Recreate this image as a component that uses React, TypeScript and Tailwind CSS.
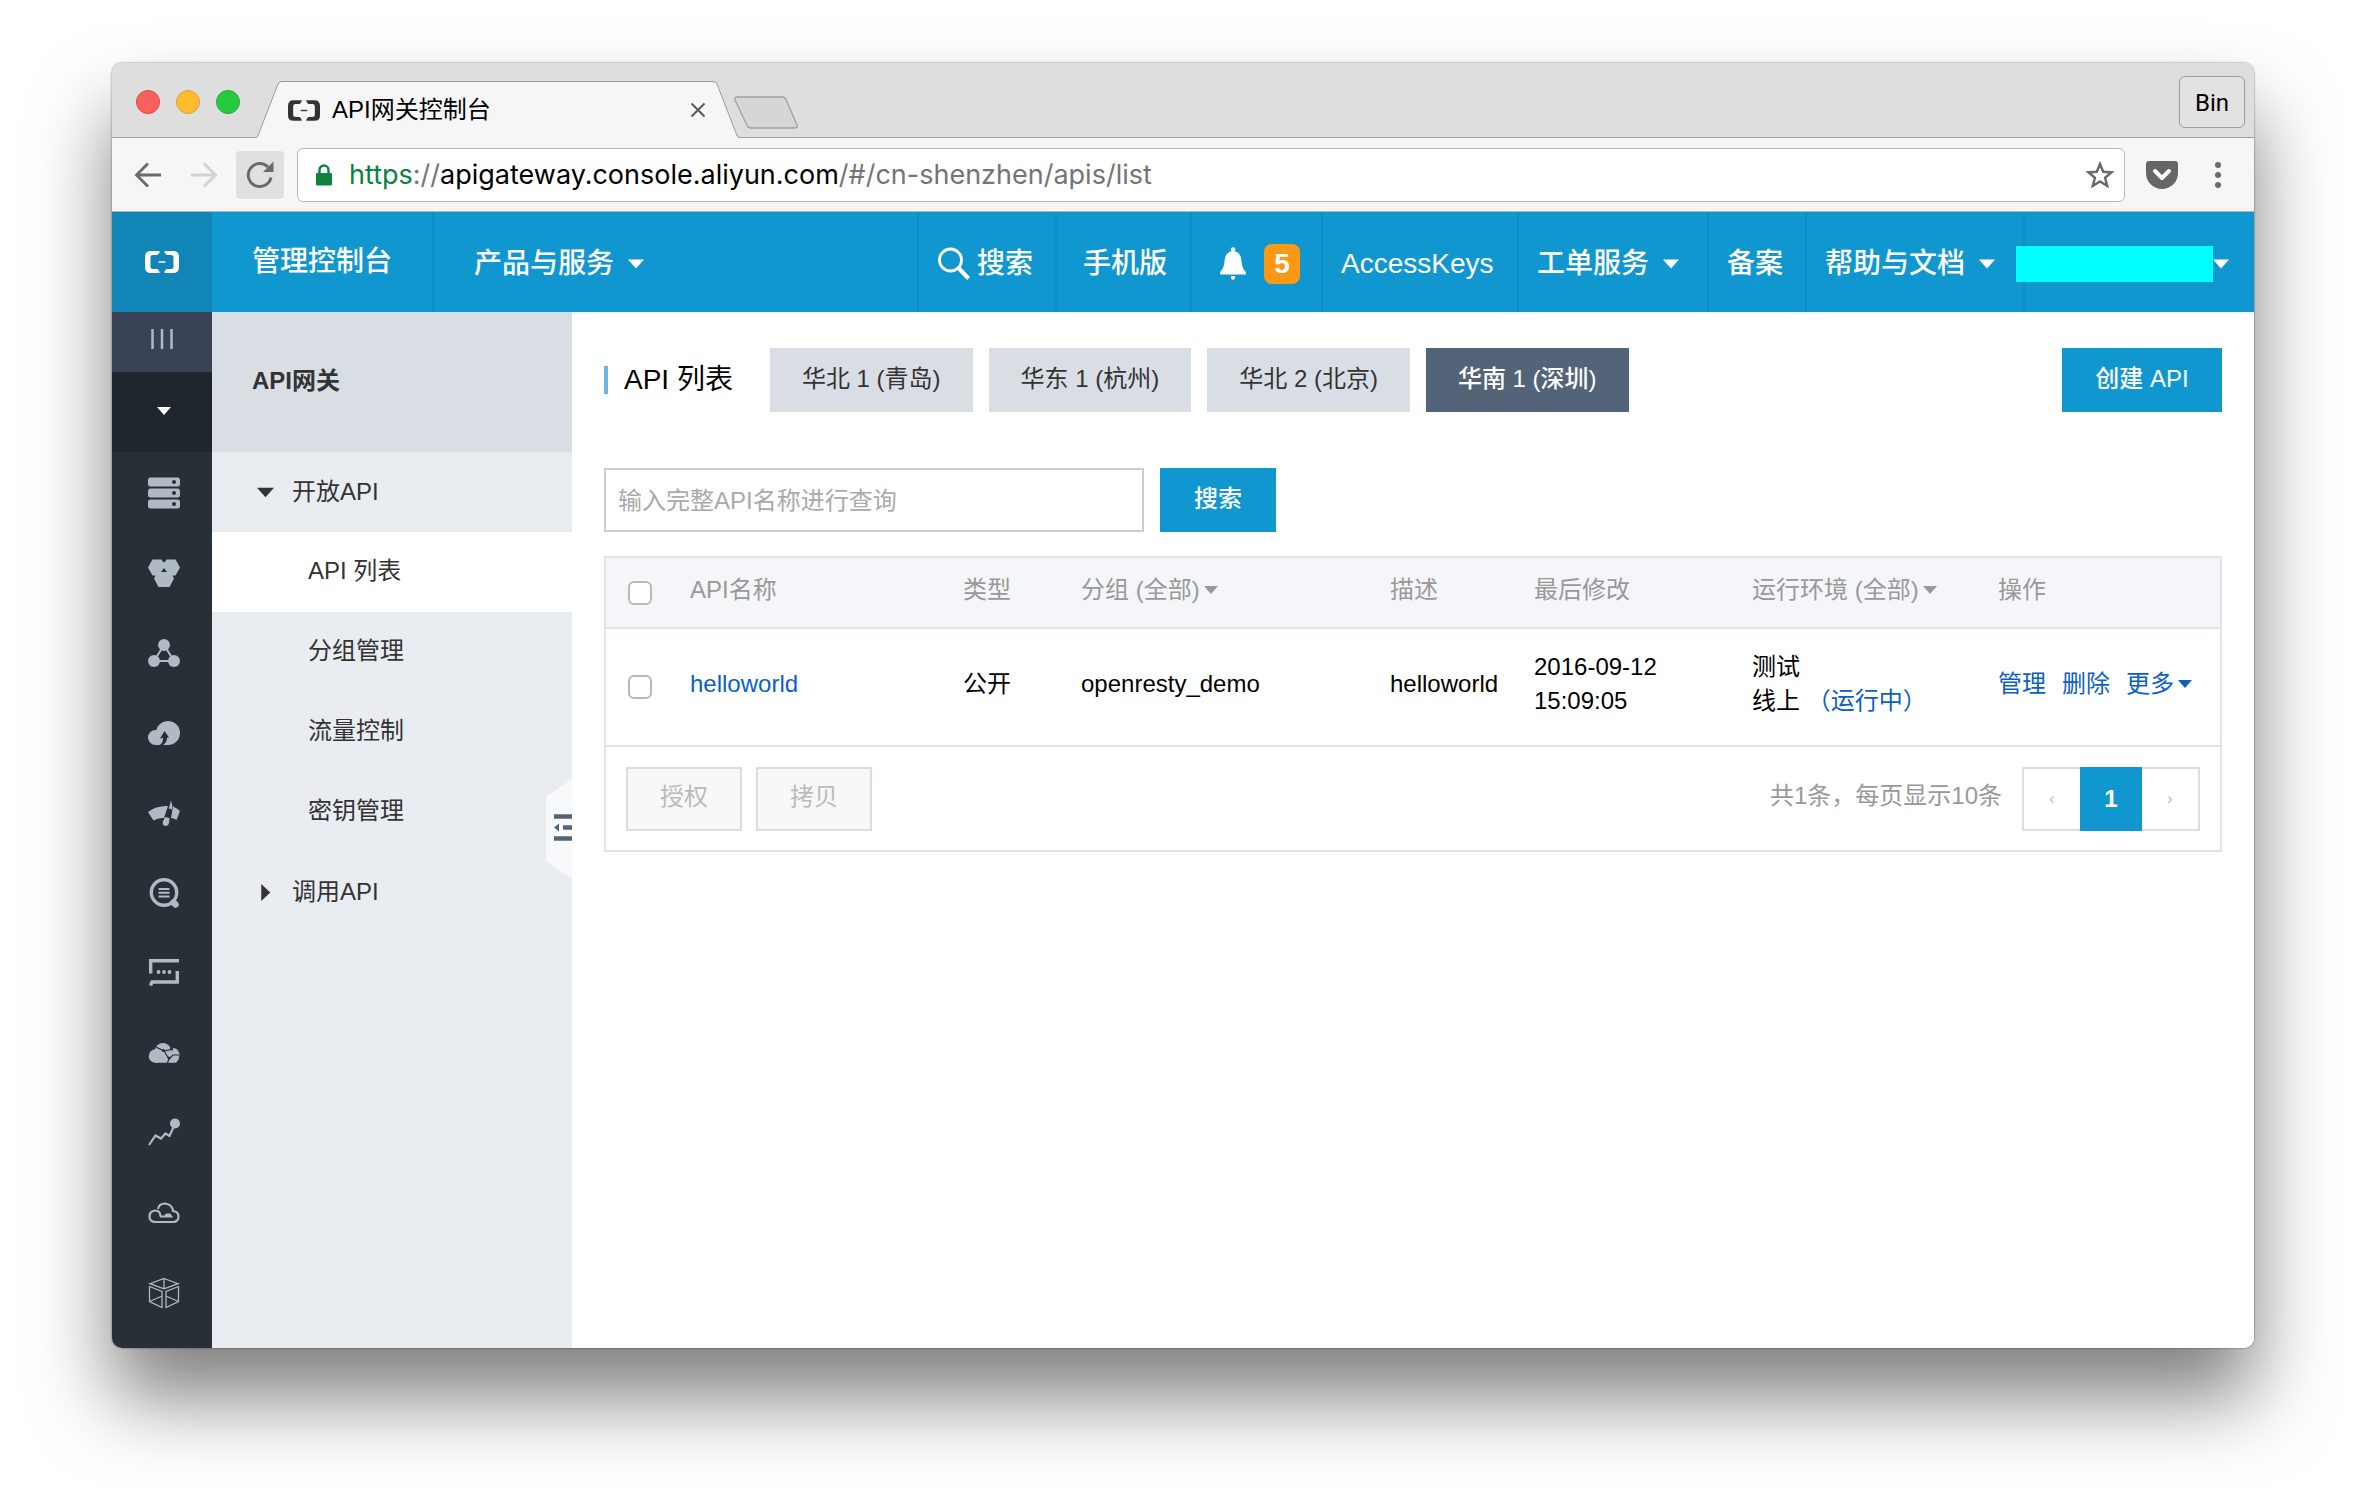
import React from "react";

type CaretProps = { className?: string; dir?: "down" | "right" };

function Caret({ className = "", dir = "down" }: CaretProps) {
  return (
    <svg viewBox="0 0 16 16" className={`shrink-0 ${className}`} fill="currentColor" aria-hidden="true">
      {dir === "down" ? <path d="M0 3.500h16l-8 9z" /> : <path d="M4 0v16l8.500-8z" />}
    </svg>
  );
}

function BrandMark({ className = "" }: { className?: string }) {
  return (
    <svg viewBox="0 0 34 22" className={`shrink-0 ${className}`} aria-hidden="true" fill="currentColor">
      <path d="M14.500 0H6Q0 0 0 6v10q0 6 6 6h8.500v-1.500l-2-2.500H8q-2.500 0-2.500-2.500v-9Q5.500 4 8 4h4.500l2-2.500z" />
      <path d="M19.500 0H28q6 0 6 6v10q0 6-6 6h-8.500v-1.500l2-2.500H26q2.500 0 2.500-2.500v-9Q28.500 4 26 4h-4.500l-2-2.500z" />
      <rect x="13.500" y="10.300" width="7" height="1.400" />
    </svg>
  );
}

const DARK = "#282f37";

const railItems: { label: string; icon: React.ReactNode }[] = [
  {
    label: "服务器",
    icon: (
      <>
        <rect x="0" y="0.500" width="32" height="9" rx="2.500" />
        <rect x="0" y="11.500" width="32" height="9" rx="2.500" />
        <rect x="0" y="22.500" width="32" height="9" rx="2.500" />
        <circle cx="26" cy="5" r="2" fill={DARK} />
        <circle cx="26" cy="16" r="2" fill={DARK} />
        <circle cx="26" cy="27" r="2" fill={DARK} />
      </>
    ),
  },
  {
    label: "数据库",
    icon: (
      <>
        <path d="M4.500 2.500h9l1.500 2.500h2l1.500-2.500h9l4.500 8-4.500 8h-3l1.500 3-4.500 8.500h-11l-4.500-8.500 1.500-3h-3l-4.500-8z" />
        <path d="M16 11l3 4h-6z" fill={DARK} />
      </>
    ),
  },
  {
    label: "网络",
    icon: (
      <>
        <path d="M16 8 6 24h20z" fill="none" stroke="currentColor" strokeWidth="2" />
        <circle cx="16" cy="8" r="6" />
        <circle cx="6" cy="24" r="6" />
        <circle cx="26" cy="24" r="6" />
      </>
    ),
  },
  {
    label: "存储",
    icon: (
      <>
        <circle cx="20" cy="16" r="12" />
        <circle cx="7.500" cy="20.500" r="7.500" />
        <path d="M7 20h14v8H7z" />
        <path d="M16.500 14l4.500 6.500-2 .2q.5 5-5.500 8.300l-2.500-.5q4.500-2.500 4-7.500l-3 .5z" fill={DARK} />
      </>
    ),
  },
  {
    label: "监控",
    icon: (
      <>
        <path d="M0 15Q8 8.500 20 9l-4 12q-6-.5-10.500 2.500z" />
        <path d="M25 9.500q4 1.500 7 4.500l-3.500 9q-2.500-2-5.500-2z" />
        <path d="M23 3.500l1.500 6-1.200 4.500h-3.200z" />
        <path d="M20.300 11.500l3.700.8-3.500 10-3.500-.8z" fill={DARK} />
        <path d="M17 20l4.500 1-.5 4.500a3.200 3.200 0 1 1-5.500-2z" />
      </>
    ),
  },
  {
    label: "日志",
    icon: (
      <g fill="none" stroke="currentColor">
        <circle cx="16" cy="15.500" r="12.700" strokeWidth="3.400" />
        <path d="M10.500 12h11M10.500 15.700h11M10.500 19.400h11" strokeWidth="2" />
        <path d="M25.500 25.500l2 2" strokeWidth="6.500" strokeLinecap="round" />
      </g>
    ),
  },
  {
    label: "消息",
    icon: (
      <>
        <path d="M2.700 16.500V3.700H31M29.300 14v11H4L2.500 28.500" fill="none" stroke="currentColor" strokeWidth="3.400" />
        <circle cx="10.500" cy="15" r="1.900" />
        <circle cx="16" cy="15" r="1.900" />
        <circle cx="21.500" cy="15" r="1.900" />
      </>
    ),
  },
  {
    label: "云分发",
    icon: (
      <>
        <circle cx="7.500" cy="19" r="6.800" />
        <circle cx="15" cy="14" r="8" />
        <circle cx="25" cy="17.500" r="6.500" />
        <path d="M7 16h22l2 6-3 3.800H7z" />
        <path d="M8 10l8 4 9-2M16 14l5 8-2 5M21 22l4-4 6 0" fill="none" stroke={DARK} strokeWidth="1.200" />
        <circle cx="15.500" cy="13.500" r="1.500" fill={DARK} />
        <circle cx="23.500" cy="12" r="1.500" fill={DARK} />
        <circle cx="21" cy="21" r="1.500" fill={DARK} />
      </>
    ),
  },
  {
    label: "统计",
    icon: (
      <>
        <path d="M1 28l6.500-9.500 5.500 3 4.500-5 4 2.500L26 9" fill="none" stroke="currentColor" strokeWidth="2.200" />
        <circle cx="27" cy="6.500" r="5" />
      </>
    ),
  },
  {
    label: "云服务",
    icon: (
      <g fill="none" stroke="currentColor" strokeWidth="2.200">
        <path d="M12.500 19.500q0-6-5.500-6-5.500.5-5.500 6 0 5.500 6 5.500H25q5.500 0 5.500-5.500 0-5-5.500-5.500-.5-6.500-8-7.500-6 0-7 5.500" />
        <path d="M12 19.500h11l-1.500-2-1.500.8-1-.8-2 1" />
      </g>
    ),
  },
  {
    label: "容器",
    icon: (
      <g fill="none" stroke="currentColor" strokeWidth="1.300">
        <path d="M16 1.500l14 5.200-14 5.200L2 6.700zM16 1.500v10.400" />
        <path d="M1.500 9.500l12.500 5v16l-12.500-6zM14 19l-12.500 5.500" />
        <path d="M30.500 9.500l-12.500 5v16l12.500-6zM18 19l12.500 5.500" />
      </g>
    ),
  },
];

const regions = [
  { name: "华北 1 (青岛)", active: false },
  { name: "华东 1 (杭州)", active: false },
  { name: "华北 2 (北京)", active: false },
  { name: "华南 1 (深圳)", active: true },
];

function TabStrip() {
  return (
    <div className="flex h-[75px] items-end border-b border-[#a0a0a0] bg-[#dedede] pl-6">
      <div className="flex gap-4 pb-[23px]">
        <button aria-label="关闭窗口" className="size-6 rounded-full border border-[#e0443e] bg-[#fc605c]" />
        <button aria-label="最小化" className="size-6 rounded-full border border-[#dea236] bg-[#fdbc2f]" />
        <button aria-label="最大化" className="size-6 rounded-full border border-[#1fae34] bg-[#27c93f]" />
      </div>
      <div className="-mb-px ml-4 flex h-[57px]">
        <svg viewBox="0 0 26 57" className="h-[57px] w-[26px]" aria-hidden="true">
          <path d="M0 57Q2 56 3 52L22 3Q23 .5 26 .5V57z" fill="#f6f6f6" />
          <path d="M0 56.500Q2 56 3 52L22 3Q23 .5 26 .5" fill="none" stroke="#9a9a9a" />
        </svg>
        <div className="flex w-[431px] items-center border-t border-[#9a9a9a] bg-[#f6f6f6] pl-[6px] pr-[7px]">
          <BrandMark className="h-[21px] w-8 text-[#333]" />
          <span className="ml-3 flex-1 text-2xl text-black">API网关控制台</span>
          <button aria-label="关闭标签页">
            <svg viewBox="0 0 16 16" className="size-4" fill="none" stroke="#5a5a5a" strokeWidth="2">
              <path d="M1.500 1.500l13 13M14.500 1.500l-13 13" />
            </svg>
          </button>
        </div>
        <svg viewBox="0 0 26 57" className="h-[57px] w-[26px]" aria-hidden="true">
          <path d="M26 57Q24 56 23 52L4 3Q3 .5 0 .5V57z" fill="#f6f6f6" />
          <path d="M26 56.500Q24 56 23 52L4 3Q3 .5 0 .5" fill="none" stroke="#9a9a9a" />
        </svg>
      </div>
      <button aria-label="新标签页" className="-ml-[6px] mb-2">
        <svg viewBox="0 0 66 33" className="h-[33px] w-[66px]">
          <path d="M4 1h45q3 0 4 2.500L64 29q1 3-2 3H18q-3 0-4-2.500L2 4q-1-3 2-3z" fill="#d6d6d6" stroke="#a0a0a0" strokeWidth="1.300" />
        </svg>
      </button>
      <button className="mb-[9px] ml-auto mr-[9px] h-[52px] w-[66px] rounded-md border border-[#9c9c9c] bg-[#e2e2e2] pt-[2px] font-[Roboto] text-2xl text-black">
        Bin
      </button>
    </div>
  );
}

function Toolbar() {
  return (
    <div className="flex h-[74px] items-center border-b border-[#b5b5b5] bg-[#f6f6f6] pl-[22px]">
      <button aria-label="后退" className="text-[#6a6a6a]">
        <svg viewBox="0 0 28 28" className="size-7" fill="none" stroke="currentColor" strokeWidth="2.800">
          <path d="M27 14H3M14 2.500L2.500 14 14 25.500" />
        </svg>
      </button>
      <button aria-label="前进" className="ml-7 text-[#d2d2d2]">
        <svg viewBox="0 0 28 28" className="size-7" fill="none" stroke="currentColor" strokeWidth="2.800">
          <path d="M1 14h24M14 2.500L25.500 14 14 25.500" />
        </svg>
      </button>
      <button aria-label="重新加载" className="ml-[18px] flex size-12 items-center justify-center rounded bg-[#e0e0e0] text-[#6a6a6a]">
        <svg viewBox="0 0 28 28" className="size-7" fill="none" stroke="currentColor" strokeWidth="3">
          <path d="M25 16.500A11.500 11.500 0 1 1 22 6" />
          <path d="M27.500.500V11H17z" fill="currentColor" stroke="none" />
        </svg>
      </button>
      <div className="ml-[13px] flex h-[54px] flex-1 items-center rounded-md border border-[#b8b8b8] bg-white pl-[17px] pr-[9px]">
        <svg viewBox="0 0 18 22" className="h-[22px] w-[18px]" aria-hidden="true">
          <path d="M4.500 10V6a4.500 4.500 0 0 1 9 0v4" fill="none" stroke="#128040" strokeWidth="2.400" />
          <rect x="1" y="9" width="16" height="12.500" rx="1" fill="#128040" />
        </svg>
        <div className="ml-4 flex-1 whitespace-nowrap font-[Inter] text-[27px] leading-9 text-[#747474]">
          <span className="text-[#0b8043]">https</span>://<span className="text-black">apigateway.console.aliyun.com</span>/#/cn-shenzhen/apis/list
        </div>
        <button aria-label="收藏">
          <svg viewBox="0 0 30 30" className="size-[30px]" fill="none" stroke="#6a6a6a" strokeWidth="2.500">
            <path d="M15 4l3.200 7.800 8.300.6-6.400 5.400 2.100 8.100L15 21.500l-7.200 4.400 2.100-8.100-6.400-5.400 8.300-.6z" />
          </svg>
        </button>
      </div>
      <button aria-label="Pocket" className="ml-5">
        <svg viewBox="0 0 34 30" className="h-[30px] w-[34px]">
          <path d="M4 1h26q3 0 3 3v9a16 16 0 0 1-32 0V4q0-3 3-3z" fill="#666" />
          <path d="M10 11l7 7 7-7" fill="none" stroke="#fff" strokeWidth="4" strokeLinecap="round" strokeLinejoin="round" />
        </svg>
      </button>
      <button aria-label="菜单" className="ml-[35px] mr-[32px]">
        <svg viewBox="0 0 8 28" className="h-7 w-2" fill="#6a6a6a">
          <circle cx="4" cy="4" r="3" />
          <circle cx="4" cy="14" r="3" />
          <circle cx="4" cy="24" r="3" />
        </svg>
      </button>
    </div>
  );
}

const navItem = "flex items-center border-l-2 border-[#108dc4] pt-1 text-[28px] text-white";

function ConsoleHeader() {
  return (
    <header className="flex h-[100px] bg-[#1197d0] font-medium">
      <a href="#home" aria-label="首页" className="flex w-[100px] items-center justify-center bg-[#1185b6] text-white">
        <BrandMark className="h-[22px] w-[34px]" />
      </a>
      <a href="#console" className="flex items-center px-10 text-[28px] text-white">
        管理控制台
      </a>
      <button className={`${navItem} gap-[14px] pl-10`}>
        产品与服务
        <Caret className="size-4" />
      </button>
      <nav className="ml-auto flex">
        <a href="#search" className={`${navItem} w-[138px] gap-[6px] pl-[18px]`}>
          <svg viewBox="0 0 34 34" className="size-[34px]" fill="none" stroke="currentColor">
            <circle cx="13.500" cy="13" r="11" strokeWidth="2.800" />
            <path d="M21.500 21l10 10.500" strokeWidth="4" />
          </svg>
          搜索
        </a>
        <a href="#mobile" className={`${navItem} w-[135px] pl-[26px]`}>
          手机版
        </a>
        <a href="#notice" aria-label="消息 5" className={`${navItem} w-[131px] gap-[18px] pl-[28px]`}>
          <svg viewBox="0 0 26 34" className="h-[34px] w-[26px]" fill="currentColor">
            <circle cx="13" cy="2.500" r="2.200" />
            <path d="M13 4q8 1 8.500 10 .3 7 4.300 11v2.500H.2V25q4-4 4.300-11Q5 5 13 4z" />
            <path d="M11 29h4v2.500q-2 2.500-4 0z" />
          </svg>
          <span className="flex h-10 w-9 items-center justify-center rounded-lg bg-[#fb9914] font-bold">5</span>
        </a>
        <a href="#keys" className={`${navItem} w-[196px] pl-[18px]`}>
          AccessKeys
        </a>
        <button className={`${navItem} w-[190px] gap-[14px] pl-[18px]`}>
          工单服务
          <Caret className="size-4" />
        </button>
        <a href="#record" className={`${navItem} w-[98px] pl-[18px]`}>
          备案
        </a>
        <button className={`${navItem} w-[218px] gap-[14px] pl-[18px]`}>
          帮助与文档
          <Caret className="size-4" />
        </button>
        <button aria-label="账号" className={`${navItem} w-[231px]`}>
          <span className="-ml-[9px] h-9 w-[197px] bg-[#0ff]" />
          <Caret className="size-4" />
        </button>
      </nav>
    </header>
  );
}

function Rail() {
  return (
    <nav className="flex w-[100px] shrink-0 flex-col bg-[#282f37] text-[#b0bac5]">
      <button aria-label="展开菜单" className="flex h-[60px] items-center justify-center bg-[#394355] pb-[6px]">
        <svg viewBox="0 0 22 20" className="h-5 w-[22px]" stroke="currentColor" strokeWidth="2.500">
          <path d="M1.500 0v20M11 0v20M20.500 0v20" />
        </svg>
      </button>
      <button aria-label="产品" className="flex h-20 items-center justify-center bg-[#1f262d] pb-[2px] pl-1 text-white">
        <Caret className="size-[14px]" />
      </button>
      {railItems.map((item) => (
        <a key={item.label} href="#product" aria-label={item.label} className="flex h-20 items-center justify-center pl-1 pt-[2px]">
          <svg viewBox="0 0 32 32" className="size-8" fill="currentColor">
            {item.icon}
          </svg>
        </a>
      ))}
    </nav>
  );
}

function SideMenu() {
  const link = "flex h-20 items-center pb-[2px] pl-24";
  return (
    <aside className="relative w-[360px] shrink-0 bg-[#e9ecf1] text-2xl text-[#333]">
      <h2 className="flex h-[140px] items-center bg-[#d9dee4] pb-[2px] pl-10 font-bold">API网关</h2>
      <button className="flex h-20 w-full items-center gap-[18px] pl-[45px]">
        <Caret className="size-[17px]" />
        开放API
      </button>
      <a href="#apis" className={`${link} bg-white`}>
        API 列表
      </a>
      <a href="#groups" className={link}>
        分组管理
      </a>
      <a href="#flow" className={link}>
        流量控制
      </a>
      <a href="#secret" className={link}>
        密钥管理
      </a>
      <button className="flex h-20 w-full items-center gap-[18px] pl-[45px]">
        <Caret dir="right" className="size-[17px]" />
        调用API
      </button>
      <button aria-label="收起菜单" className="absolute right-0 top-[467px]">
        <svg viewBox="0 0 26 100" className="h-[100px] w-[26px]">
          <path d="M26 0v100L0 82V18z" fill="#f7f9fa" />
          <path d="M8 37.500h18M17 48.500h9M8 59.500h18" fill="none" stroke="#546478" strokeWidth="4.500" />
          <path d="M8 48.500l5-4v8z" fill="#546478" />
        </svg>
      </button>
    </aside>
  );
}

const checkbox =
  "block size-6 appearance-none rounded-md border-2 border-[#b9b9b9] bg-white checked:bg-[#1197d0]";

function ApiTable() {
  return (
    <section className="mt-6 border-2 border-[#e1e3e8]">
      <table className="w-full table-fixed text-left text-2xl text-black">
        <colgroup>
          <col className="w-[68px]" />
          <col className="w-[273px]" />
          <col className="w-[118px]" />
          <col className="w-[309px]" />
          <col className="w-[144px]" />
          <col className="w-[218px]" />
          <col className="w-[246px]" />
          <col className="w-[238px]" />
        </colgroup>
        <thead>
          <tr className="h-[70px] border-b-2 border-[#e1e3e8] bg-[#f5f6fa] text-[#999] [&>th]:pb-[6px] [&>th]:pl-4 [&>th]:font-normal">
            <th className="!pb-0 !pl-[22px]">
              <input type="checkbox" aria-label="全选" className={checkbox} />
            </th>
            <th>API名称</th>
            <th>类型</th>
            <th>
              <button className="flex items-center gap-1">
                分组 (全部)
                <Caret className="size-[14px]" />
              </button>
            </th>
            <th>描述</th>
            <th>最后修改</th>
            <th>
              <button className="flex items-center gap-1">
                运行环境 (全部)
                <Caret className="size-[14px]" />
              </button>
            </th>
            <th>操作</th>
          </tr>
        </thead>
        <tbody>
          <tr className="h-[118px] border-b-2 border-[#e1e3e8] leading-[34px] [&>td]:pb-[6px] [&>td]:pl-4">
            <td className="!pb-0 !pl-[22px]">
              <input type="checkbox" aria-label="选择 helloworld" className={checkbox} />
            </td>
            <td>
              <a href="#helloworld" className="text-[#0b5fc6]">
                helloworld
              </a>
            </td>
            <td>公开</td>
            <td>openresty_demo</td>
            <td>helloworld</td>
            <td>
              2016-09-12
              <br />
              15:09:05
            </td>
            <td>
              测试
              <br />
              线上{" "}
              <a href="#running" className="text-[#0b5fc6]">
                （运行中）
              </a>
            </td>
            <td>
              <div className="flex gap-4 text-[#0b5fc6]">
                <a href="#manage">管理</a>
                <a href="#delete">删除</a>
                <button className="flex items-center gap-1">
                  更多
                  <Caret className="size-[14px]" />
                </button>
              </div>
            </td>
          </tr>
        </tbody>
      </table>
      <div className="flex items-center p-5 pb-[19px] text-2xl text-[#999]">
        <button disabled className="h-16 w-[116px] border-2 border-[#ddd] bg-[#f7f8f8] pb-1 text-[#bbb]">
          授权
        </button>
        <button disabled className="ml-[14px] h-16 w-[116px] border-2 border-[#ddd] bg-[#f7f8f8] pb-1 text-[#bbb]">
          拷贝
        </button>
        <span className="ml-auto pb-[6px]">共1条，每页显示10条</span>
        <div className="ml-5 flex">
          <button aria-label="上一页" className="h-16 w-[58px] border-2 border-r-0 border-[#ddd] text-base text-[#bbb]">
            ‹
          </button>
          <button className="h-16 w-[62px] bg-[#1197d0] font-bold text-white">1</button>
          <button aria-label="下一页" className="h-16 w-[58px] border-2 border-l-0 border-[#ddd] text-base text-[#bbb]">
            ›
          </button>
        </div>
      </div>
    </section>
  );
}

function Content() {
  return (
    <main className="min-w-0 flex-1 bg-white pl-8 pr-8 pt-9">
      <div className="flex items-center gap-4">
        <h1 className="mr-[21px] flex items-center gap-4 text-[28px] text-black">
          <span className="h-7 w-1 bg-[#6db5e6]" />
          API 列表
        </h1>
        {regions.map((r) => (
          <button
            key={r.name}
            className={
              r.active
                ? "h-16 bg-[#546478] px-8 pb-[2px] text-2xl font-medium text-white"
                : "h-16 bg-[#d9dde4] px-8 pb-[2px] text-2xl text-[#333]"
            }
          >
            {r.name}
          </button>
        ))}
        <button className="ml-auto h-16 w-40 bg-[#1197d0] pb-[2px] text-2xl font-medium text-white">创建 API</button>
      </div>
      <div className="mt-14 flex gap-4">
        <input
          type="text"
          aria-label="API名称"
          placeholder="输入完整API名称进行查询"
          className="h-16 w-[540px] border-2 border-[#ccc] px-3 pt-[2px] text-2xl placeholder:text-[#aaa]"
        />
        <button className="h-16 w-[116px] bg-[#1197d0] pb-[2px] text-2xl font-medium text-white">搜索</button>
      </div>
      <ApiTable />
    </main>
  );
}

export default function App() {
  return (
    <div
      lang="zh-CN"
      className="flex min-h-screen flex-col bg-white px-28 pb-40 pt-[63px] font-['Liberation_Sans','Noto_Sans_CJK_SC',sans-serif]"
    >
      <div className="flex flex-1 flex-col overflow-hidden rounded-[10px] shadow-[0_0_2px_rgba(0,0,0,0.6),0_50px_80px_rgba(0,0,0,0.5)]">
        <TabStrip />
        <Toolbar />
        <ConsoleHeader />
        <div className="flex flex-1">
          <Rail />
          <SideMenu />
          <Content />
        </div>
      </div>
    </div>
  );
}
